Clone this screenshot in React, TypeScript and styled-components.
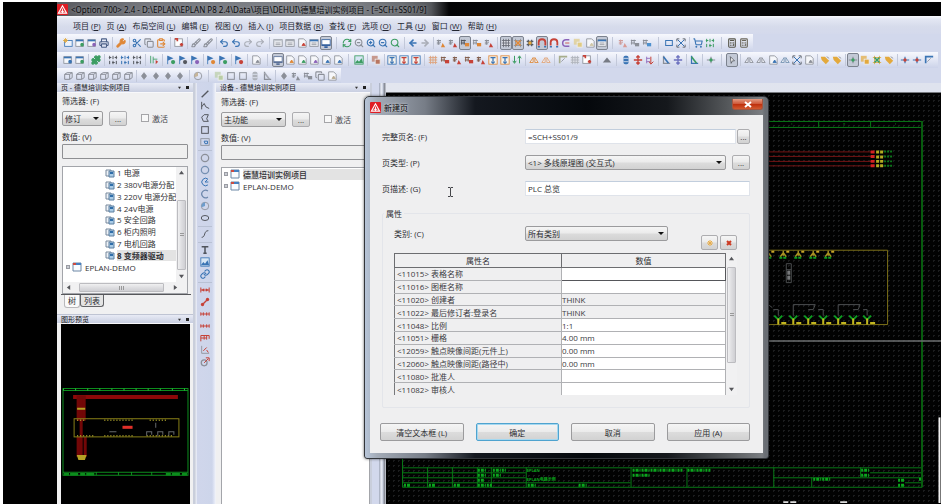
import React from "react";
import styled, { createGlobalStyle, css } from "styled-components";
import {
  Scissors, Copy, ClipboardPaste, Printer, Wrench, Brush, RefreshCw, ZoomIn, ZoomOut, Search,
  ArrowLeft, ArrowRight, Undo2, Redo2, ShoppingCart, Puzzle, Calculator, Link,
} from "lucide-react";

const Global = createGlobalStyle`
  * { box-sizing: border-box; }
  body { margin: 0; background: #000; }
  body, button, input, select, table {
    font-family: "Open Sans", "Noto Sans CJK SC", sans-serif;
    font-size: 8px;
    line-height: 11px;
    color: #2c2c30;
  }
  button, input, select { margin: 0; padding: 0; }
`;

/* ---------- shell ---------- */
const Page = styled.div`
  min-height: 100vh;
  display: flex;
  flex-direction: column;
  border-top: 2px solid #fff;
  border-left: 3px solid #fff;
  padding-left: 54px;
  background: #000;
  position: relative;
  overflow: hidden;
`;
const TitleBar = styled.header`
  height: 14px;
  flex: none;
  display: flex;
  align-items: center;
  background:
    radial-gradient(ellipse at 131px 10px, #79b2dd, transparent 16px),
    radial-gradient(ellipse at 172px 10px, #86bd7f, transparent 16px),
    radial-gradient(ellipse at 226px 10px, #c9d2d4, transparent 18px),
    radial-gradient(ellipse at 268px 12px, #d5d9dc, transparent 14px),
    linear-gradient(90deg, #5a5b60 0, #75777d 90px, #7b7e84 190px, #83868c 270px, #6c6f73 345px, #55575b 374px, #050506 392px, #08090b 60%, #000);
`;
const TitleText = styled.h1`
  margin: 0 0 0 3px;
  font-family: "Noto Sans", "Noto Sans CJK SC", sans-serif;
  font-size: 8px;
  line-height: 13px;
  font-weight: 400;
  color: #08080a;
  white-space: nowrap;
  text-shadow: 0 0 3px #a5a8ae;
`;
const MenuBar = styled.nav`
  height: 18px;
  flex: none;
  display: flex;
  align-items: center;
  gap: 6px;
  padding-left: 16px;
  background: linear-gradient(#f8f9fd 0, #e3e7f3 3px, #d6dbeb 60%, #d4d9ec);
`;
const MenuItem = styled.button`
  border: 0;
  background: none;
  white-space: nowrap;
  color: #222531;
`;
const BarRow = styled.div<{ $h: number }>`
  height: ${(p) => p.$h}px;
  flex: none;
  display: flex;
  background: #d2d8ec;
`;
const Bar = styled.div`
  display: flex;
  align-items: center;
  padding: 0 3px 0 5px;
  background: linear-gradient(#f7f8fd 0, #e4e8f5 45%, #ccd3e9);
`;
const pressedCss = css`
  background: #c3c9d6;
  border-color: #7c828e;
`;
const ToolButton = styled.button<{ $on?: boolean }>`
  width: 12px;
  height: 14px;
  flex: none;
  display: grid;
  place-items: center;
  border: 1px solid transparent;
  border-radius: 2px;
  background: none;
  ${(p) => p.$on && pressedCss}
  svg { display: block; width: 10px; height: 10px; }
`;
const Sep = styled.span<{ $w: number }>`
  width: ${(p) => p.$w}px;
  height: 12px;
  flex: none;
  background: linear-gradient(#c2c8d9, #c2c8d9) center / 1px 100% no-repeat;
`;
const Workspace = styled.main`
  flex: 1;
  display: flex;
  min-height: 421px;
  background: #d2d8ec;
`;

/* ---------- icons ---------- */
const BLUE = "#3a74b4", GREY = "#8b8f98", GREEN = "#3c9d62", RED = "#c64238", ORANGE = "#df8736", PURPLE = "#8a62b8", DARK = "#55585f", YELLOW = "#e3a93c";

function Glyph({ k, c, d = GREY }: { k: string; c: string; d?: string }) {
  const L: Record<string, any> = {
    cut: Scissors, copy: Copy, paste: ClipboardPaste, print: Printer, wrench: Wrench, brush: Brush, refresh: RefreshCw,
    zin: ZoomIn, zout: ZoomOut, find: Search, left: ArrowLeft, right: ArrowRight, undo: Undo2, redo: Redo2,
    cart: ShoppingCart, puzzle: Puzzle, calc: Calculator, link: Link,
  };
  if (L[k]) {
    const C = L[k];
    return <C color={c} strokeWidth={k === "left" || k === "right" ? 4 : 2.6} fill={k === "puzzle" || k === "wrench" ? c : "none"} />;
  }
  const s = { fill: "none", stroke: c, strokeWidth: 1.2 };
  const shapes: Record<string, React.ReactNode> = {
    win: <><rect x="1" y="2" width="9" height="8" fill="#f6f8fc" stroke={d} /><path d="M1 3h9" stroke={BLUE} strokeWidth="2" /><circle cx="8.500" cy="8" r="2.200" fill={c} /></>,
    winstar: <><rect x="2" y="3" width="9" height="7" fill="#eef2fa" stroke={BLUE} /><path d="M3 0v6M0 3h6M1 1l4 4M5 1L1 5" stroke={c} /></>,
    page: <><path d="M2 1h6l3 3v7H2z" fill="#f6f7fa" stroke={d} /><path d="M6 9l2-3 2 3z" fill={c} stroke={c} /></>,
    list: <><rect x="1" y="2" width="10" height="8" fill="#f4f5f9" stroke={d} /><path d="M1 3h10" stroke={c} strokeWidth="2" /><path d="M3 6h6M3 8h6" stroke={d} /></>,
    screen: <><rect x="1" y="2" width="10" height="7" fill="#fff" stroke={c} /><path d="M1 8.500h10M4 11h4" stroke={c} strokeWidth="2" /></>,
    region: <><rect x="1" y="1" width="9" height="9" fill="#fff" stroke={d} /><path d="M1 1h3v3M7 8h4M9 6v4" stroke={c} strokeWidth="2" fill="none" /></>,
    flag: <><path d="M2 1v10" stroke={BLUE} /><path d="M2 1l7 3-7 3z" fill={BLUE} /><circle cx="8.500" cy="8.500" r="2.500" fill={c} /></>,
    sym: <><path d="M1 3h5M1 5h5M1 7h4M3 2v6" stroke={d} strokeWidth="1.200" /><path d="M6 11l2-5 3 5z" fill={c} /></>,
    symbox: <><path d="M1 3h6M2 2v6M5 2v6M1 6h5" stroke={d} strokeWidth="1.200" /><rect x="6" y="6" width="5" height="4" fill={c} /></>,
    grid: <><rect x="1" y="2" width="10" height="8" fill="#d9dce2" /><path d="M1 3h10M1 6h10M1 9h10M3 1v10M6 1v10M9 1v10" stroke={d} /></>,
    gridx: <><path d="M1 3h10M1 9h10M3 1v10M9 1v10" stroke={d} /><path d="M3 3l6 6M9 3l-6 6" stroke={c} strokeWidth="2" /></>,
    hash: <><path d="M2 4h8M2 8h8M4 2v8M8 2v8" stroke={d} strokeWidth="1.400" /><circle cx="6" cy="6" r="2" fill={c} /></>,
    snap: <><path d="M2 9V5a4 3.500 0 0 1 8 0v4" fill="none" stroke={c} strokeWidth="2.200" /><path d="M1 10.500h2.500M8.500 10.500H11" stroke={d} strokeWidth="2" /></>,
    snapside: <><path d="M10 2H6a4 4 0 0 0 0 8h4" fill="none" stroke={c} strokeWidth="1.800" /><path d="M5 6h5" stroke={RED} /></>,
    branch: <><path d="M2 2v8M2 4h4M2 8h4" stroke={d} /><path d="M7 2v8M5 8l2 3 3-3" {...s} /></>,
    down: <path d="M3 1v8M1 7l2 3 2-3M9 10V2M7 4l2-3 2 3" {...s} />,
    pins: <path d="M2 1v4M6 1v4M10 1v4M2 7v4M6 7v4M10 7v4M1 3h3M5 9h3M8 3h3" {...s} />,
    bars: <><path d="M2 1v9M5 2v8M5 5h5" stroke={d} /><path d="M8 6l3 2-3 3z" fill={c} /></>,
    box: <rect x="2" y="3" width="8" height="6" {...s} />,
    cube: <path d="M2 4l3-2h6v6l-3 2H2zM2 4h6v6M8 4l3-2" {...s} />,
    diamond: <path d="M6 2l3 4-3 4-3-4z" fill={d} stroke={c} />,
    xarrow: <><path d="M2 2l8 8M10 2l-8 8" stroke={c} strokeWidth="1.200" /><path d="M1 4V1h3M8 1h3v3M11 8v3H8M4 11H1V8" fill="none" stroke={DARK} /></>,
    monitor: <><rect x="1" y="1" width="10" height="10" fill="#f5f2ec" stroke={c} /><path d="M3 3h6M6 4v4M4 8l2 2 2-2" fill="none" stroke={d} strokeWidth="1.500" /></>,
    move: <path d="M6 1v10M1 6h10M4 3l2-2 2 2M4 9l2 2 2-2" {...s} strokeWidth={1.6} />,
    tri: <path d="M1 9l5-6 5 6z" fill={c} />,
    corner: <><path d="M2 10V2h9" fill="none" stroke={c} strokeWidth="2" /><path d="M4 8l4-4" stroke={d} /></>,
    angle: <><path d="M3 1v9h8" fill="none" stroke={d} strokeWidth="1.500" /><path d="M3 2l6 8" stroke={c} strokeWidth="2" /></>,
    cyl: <><rect x="3" y="1" width="6" height="10" rx="2" fill={c} /><path d="M3 4h6M3 8h6" stroke="#dfe5f2" /></>,
    pointer: <path d="M4 2l5 5H6.500L5 10z" fill="#fff" stroke={c} />,
    mirror: <><path d="M1 9l4-6v6zM7 3l4 6H7z" fill="#e8ebf2" stroke={c} /></>,
    tag: <><path d="M1 2h5l5 5-4 4-5-5z" fill={c} /><path d="M8 2l3 2" stroke={d} /></>,
    group: <><rect x="1" y="1" width="7" height="7" fill={c} opacity=".7" /><rect x="5" y="5" width="6" height="6" fill={c} stroke="#eee" /></>,
    node: <><path d="M1 6h10M6 2v8" stroke={d} strokeWidth="1.400" /><circle cx="6" cy="6" r="2" fill={c} /></>,
    line: <path d="M2 10l8-8" {...s} strokeWidth={1.6} />,
    poly: <path d="M2 1v9M2 7l3-4 2 4 4 2" {...s} />,
    pgon: <path d="M10 2H5L2 5l2 5h6L8 7z" {...s} />,
    rect: <rect x="2" y="2" width="8" height="8" {...s} />,
    rectc: <><rect x="1" y="2" width="10" height="8" fill="none" stroke={d} /><path d="M5 5h4v3H6z" {...s} /></>,
    circ: <circle cx="6" cy="6" r="4.400" {...s} strokeWidth={1.5} />,
    arc: <path d="M9.500 2.500a4.500 4.500 0 1 0 0 7" {...s} strokeWidth={1.5} />,
    pie: <><path d="M9.500 2.500a4.500 4.500 0 1 0 0 7M6 6h4M6 6l3-3" {...s} /></>,
    sector: <><circle cx="6" cy="6" r="4.500" fill="none" stroke={d} /><path d="M6 6V1.500a4.500 4.500 0 0 0-4 6z" fill={c} /></>,
    oval: <ellipse cx="6" cy="6" rx="4.500" ry="3" {...s} />,
    curve: <path d="M2 10c5 0 2-8 8-8" {...s} />,
    text: <path d="M2 2h8M6 2v8M4 10h4" {...s} strokeWidth={1.8} />,
    photo: <><rect x="1" y="1" width="10" height="10" fill="#d7e6f5" stroke={c} /><path d="M1 10l3-4 2 2 3-4 2 6z" fill={c} /></>,
    dim: <><path d="M1 3v6M11 3v6M1 6h10" {...s} /><path d="M2 6l3-2v4zM10 6L7 4v4z" fill={c} /></>,
    dimc: <path d="M1 4v4M4 4v4M8 4v4M11 4v4M1 6h10" {...s} />,
    dimd: <><path d="M3 9l6-6" {...s} strokeWidth={1.6} /><circle cx="3" cy="9" r="2" fill={c} /><circle cx="9" cy="3" r="2" fill={c} /></>,
    dimg: <><path d="M1 3h10M1 3v7M5 3v5M8 3v5M11 3v4M1 6h7" {...s} /></>,
    dima: <><path d="M2 1v9h9" fill="none" stroke={d} /><path d="M4 7l4-4M8 6l2 3" {...s} /></>,
    dimr: <><circle cx="5" cy="7" r="3.500" fill="none" stroke={d} strokeWidth="1.500" /><path d="M5 7l5-5M7 1h4v4" {...s} /></>,
  };
  return <svg viewBox="0 0 12 12" aria-hidden="true">{shapes[k]}</svg>;
}

type Item = [string, string, string?, boolean?] | number;

const row1: Item[] = [
  ["winstar", YELLOW], ["win", GREEN], ["win", PURPLE], ["print", "#4b5f86"], 5, ["wrench", ORANGE], 4,
  ["cut", BLUE], ["copy", GREY], ["paste", ORANGE], 6, ["region", RED], 5, ["brush", GREY], ["brush", GREY], 4,
  ["undo", BLUE], ["undo", BLUE], ["redo", "#a9adb6"], ["redo", "#a9adb6"], 6,
  ["list", "#c3c7ce"], ["list", "#a5a9b2"], ["page", RED], ["list", BLUE], ["screen", "#35619f", GREY, true], 9,
  ["refresh", GREEN], ["zout", GREY], ["zin", BLUE], ["zout", BLUE], ["find", GREEN], 6,
  ["left", BLUE], ["right", "#a9adb6"], 4,
  ["sym", ORANGE], ["sym", RED], ["symbox", ORANGE, DARK, true], ["symbox", ORANGE], ["sym", RED], 5,
  ["grid", GREY, "#666a73", true], ["gridx", ORANGE, GREY, true], ["hash", YELLOW, DARK], ["snap", RED, BLUE, true],
  ["snap", RED, BLUE], ["snapside", PURPLE], ["group", "#e0cb83"], ["page", "#cfc6a7"], ["list", BLUE, GREY, true], 9,
  ["sym", "#d99a94", "#cf9d9b"], ["symbox", GREY], ["symbox", "#4d91cf"], 10, ["box", BLUE], ["xarrow", BLUE], 5,
  ["cart", BLUE], ["pins", GREEN], 10, ["calc", "#57564a"], ["calc", "#6b675a"],
];
const row2: Item[] = [
  ["win", BLUE], ["win", GREEN], 4, ["puzzle", GREEN], 5, ["pins", DARK], ["pins", BLUE], ["pins", DARK], 5, ["bars", RED, GREEN], 5,
  ["flag", GREEN], ["flag", DARK], ["flag", PURPLE], 4, ["flag", ORANGE], ["flag", GREEN], 4, ["flag", RED], 5, ["page", GREY], 10,
  ["screen", "#5b7199", GREY, true], ["page", ORANGE], ["page", GREEN], ["page", PURPLE], ["page", BLUE], ["page", BLUE], 9,
  ["photo", GREEN], 5, ["group", "#b87560"], 4, ["monitor", BLUE, BLUE], ["monitor", BLUE, RED], ["monitor", BLUE, RED], 5,
  ["grid", ORANGE, "#dfa27d"], ["symbox", RED, "#84604f"], ["sym", RED, "#84604f"], ["symbox", RED, "#84604f"], ["sym", RED, "#84604f"],
  ["monitor", ORANGE, BLUE], ["monitor", ORANGE, BLUE], ["down", GREEN], 5, ["mirror", ORANGE], ["mirror", "#e2a476"], 5,
  ["corner", "#a7ad8c"], ["grid", GREY, "#b0b4bd"], ["region", RED], 8, ["tri", "#777b84"], 7,
  ["cyl", BLUE], ["move", RED], ["branch", RED, PURPLE], 4, ["angle", BLUE], ["move", "#6d72bf"], 4, ["angle", GREEN, BLUE], 5,
  ["node", GREEN], 9, ["pointer", DARK, GREY, true], 5,
  ["mirror", GREY], ["mirror", GREY], ["page", BLUE], ["mirror", "#7190b0"], ["xarrow", BLUE], ["page", GREY], 4,
  ["tag", YELLOW], ["tag", YELLOW], 4, ["node", GREEN, GREY, true], ["group", YELLOW], ["gridx", GREEN, YELLOW], ["tag", YELLOW], 4,
  ["node", RED, BLUE], ["node", RED, BLUE], ["corner", BLUE],
];
const row3: Item[] = [
  ["cube", GREY], ["cube", GREY], ["cube", GREY], ["cube", GREY], ["cube", GREY], ["cube", GREY], 4,
  ["diamond", GREY], ["diamond", GREY], ["diamond", GREY], ["diamond", GREY], 6, ["sector", "#c6b59a"], 9,
  ["group", "#b9cda5"], ["rect", GREY], ["rect", GREY], ["cyl", "#adb1b9"], ["angle", "#a5a9b2"], 5,
  ["diamond", GREY], ["sym", GREY], ["symbox", GREY], ["copy", GREY], ["page", "#b8ab92"],
];
const sideTools: Item[] = [
  ["line", DARK], ["poly", DARK], ["pgon", DARK], ["rect", DARK], ["rectc", BLUE], 4,
  ["circ", GREY], ["circ", "#7690b2"], ["pie", BLUE], ["arc", "#6d87ab"], ["sector", "#6d9ccc"], ["oval", DARK], 5,
  ["curve", DARK], 4, ["text", "#50545c"], ["photo", BLUE], ["link", BLUE], 4,
  ["dim", RED], ["dimd", RED], ["dimc", RED], ["dimc", RED], ["dimg", RED], ["dima", RED], ["dimr", RED],
];

const Tools = ({ items }: { items: Item[] }) => (
  <>
    {items.map((it, i) =>
      typeof it === "number" ? <Sep key={i} $w={it} /> : (
        <ToolButton key={i} type="button" aria-label={it[0]} $on={it[3]}><Glyph k={it[0]} c={it[1]} d={it[2]} /></ToolButton>
      )
    )}
  </>
);
const SideBar = styled.div`
  width: 21px;
  flex: none;
  padding: 5px 3px 0 2px;
  background: linear-gradient(90deg, #b7bdcc 0, #fafbfe 1px, #d0d6eb 2px, #cdd5ea 17px, #dfe4f4 19px, #f4f5f8);
  display: flex;
  flex-direction: column;
  align-items: center;
  ${ToolButton} { width: 14px; height: 12px; }
  ${Sep} { width: 14px; height: 4px; background: linear-gradient(#b9c1d4, #b9c1d4) center / 100% 1px no-repeat; }
`;

/* ---------- docked panels ---------- */
const Dock = styled.aside<{ $w: number }>`
  width: ${(p) => p.$w}px;
  flex: none;
  display: flex;
  flex-direction: column;
  background: #f0f0f1;
  border-right: 2px solid #c9cedb;
`;
const DockHead = styled.div`
  height: 10px;
  flex: none;
  display: flex;
  align-items: center;
  justify-content: space-between;
  padding: 0 4px;
  background: linear-gradient(#e8ebf5, #c9cfe1);
  border-bottom: 1px solid #f8f8fb;
  h2 { margin: 0; font-size: 7px; line-height: 9px; font-weight: 400; color: #15161a; }
  span { display: flex; gap: 5px; }
  svg { width: 3px; height: 3px; display: block; }
`;
const DockBody = styled.div`
  padding: 0 5px;
  display: flex;
  flex-direction: column;
`;
const Caption = styled.label<{ $t: number }>`
  margin-top: ${(p) => p.$t}px;
  line-height: 11px;
`;
const FilterRow = styled.div`
  display: flex;
  align-items: center;
  margin-top: 4px;
  height: 16px;
  gap: 6px;
  label { display: flex; align-items: center; gap: 3px; margin-left: 8px; color: #45464a; }
`;
const Check = styled.input`
  appearance: none;
  width: 8px;
  height: 8px;
  background: #f8f8f8;
  border: 1px solid #a5a5a8;
`;
const Field = styled.input`
  height: 15px;
  width: 100%;
  min-width: 0;
  padding: 0 2px;
  background: #fff;
  border: 1px solid #dfe3ea;
  border-top-color: #c2cedd;
  outline: 0;
`;
const FilterField = styled(Field)`
  margin-top: 2px;
  border-color: #8e8f92;
  border-radius: 1px;
  background: #efefef;
`;
const raised = css`
  border: 1px solid #9b9b9d;
  border-radius: 2px;
  background: linear-gradient(#f5f5f5, #ebebeb 48%, #dcdcdc 52%, #d2d2d2);
`;
const SelectWrap = styled.span<{ $w?: number }>`
  position: relative;
  display: block;
  width: ${(p) => (p.$w ? p.$w + "px" : "100%")};
  height: 15px;
  select {
    ${raised}
    appearance: none;
    display: block;
    width: 100%;
    height: 100%;
    padding: 0 12px 0 2px;
  }
  &::after {
    content: "";
    position: absolute;
    right: 4px;
    top: 6px;
    border: 3px solid transparent;
    border-top-color: #111;
    border-bottom: 0;
    pointer-events: none;
  }
`;
const SmallButton = styled.button<{ $w?: number }>`
  ${raised}
  width: ${(p) => p.$w || 18}px;
  height: 15px;
  flex: none;
  display: grid;
  place-items: center;
  border-color: #adadb0;
  color: #333;
  svg { width: 8px; height: 8px; display: block; }
`;
const TreeBox = styled.div<{ $h?: number }>`
  margin-top: 7px;
  display: flex;
  flex-direction: column;
  ${(p) => (p.$h ? `height: ${p.$h}px;` : "flex: 1;")}
  background: #fff;
  border: 1px solid #a3a5aa;
`;
const TreeMain = styled.div`
  flex: 1;
  display: flex;
  min-height: 0;
`;
const TreeList = styled.ul<{ $h: number }>`
  flex: 1 0 0;
  min-width: 0;
  height: ${(p) => p.$h}px;
  margin: 0;
  padding: 0;
  list-style: none;
  display: grid;
  grid-auto-rows: 1fr;
  overflow: hidden;
`;
const RootList = styled(TreeList)`
  flex: none;
`;
const TreeItem = styled.li<{ $in: number; $sel?: boolean }>`
  display: flex;
  align-items: center;
  gap: 2px;
  padding-left: ${(p) => p.$in}px;
  white-space: nowrap;
  color: #303034;
  svg { flex: none; width: 10px; height: 10px; }
  b { font-weight: ${(p) => (p.$sel ? 700 : 400)}; ${(p) => p.$sel && "background: #e3e3e3; flex: 1;"} line-height: 11px; }
`;
const RootItem = styled(TreeItem)`
  gap: 3px;
  b { ${(p) => p.$sel && "font-weight: 500;"} }
  i { width: 4px; height: 4px; margin-right: -1px; border: 1px solid #9a9ca3; background: #c9ccd3; }
`;
const Track = styled.div<{ $v?: boolean }>`
  flex: none;
  ${(p) => (p.$v ? "width: 11px; flex-direction: column;" : "height: 11px;")}
  display: flex;
  align-items: center;
  justify-content: space-between;
  padding: 1px;
  background: #f1f1f2;
  svg { width: 5px; height: 5px; margin: 2px; flex: none; }
`;
const Thumb = styled.div<{ $v?: boolean; $len: number }>`
  border: 1px solid #bcbcc0;
  border-radius: 1px;
  display: grid;
  place-items: center;
  flex: none;
  ${(p) => (p.$v
    ? `width: 9px; height: ${p.$len}px; background: linear-gradient(90deg,#f0f0f1,#dedee1,#cfcfd3);`
    : `height: 9px; width: ${p.$len}px; background: linear-gradient(#f0f0f1,#dedee1,#cfcfd3);`)}
  &::before { content: ""; ${(p) => (p.$v ? "width: 4px; height: 4px; background: repeating-linear-gradient(#999 0 1px, transparent 1px 2px);" : "width: 6px; height: 4px; background: repeating-linear-gradient(90deg,#999 0 1px, transparent 1px 2px);")} }
`;
const Spacer = styled.div<{ $h: number }>`
  height: ${(p) => p.$h}px;
  flex: none;
`;
const Tabs = styled.div`
  display: flex;
  height: 16px;
  align-items: flex-start;
  margin: 0 2px 0 4px;
  border-top: 1px solid #56575b;
`;
const Tab = styled.button<{ $on?: boolean }>`
  height: ${(p) => (p.$on ? 13 : 12)}px;
  padding: 0 3px;
  border: 1px solid ${(p) => (p.$on ? "#b9b9bc" : "#626367")};
  border-top: 0;
  border-radius: 0 0 3px 3px;
  background: ${(p) => (p.$on ? "#fafafa" : "#e4e4e4")};
  line-height: 10px;
  &:first-child { margin-left: 3px; }
`;
const Preview = styled.div`
  flex: 1;
  margin: 0 3px 0 4px;
  background: #000;
  svg { display: block; width: 100%; }
`;
const PreviewHead = styled(DockHead)`
  margin-top: 4px;
  border-top: 1px solid #bfc4d3;
`;
const DevicePane = styled(Dock)`
  ${DockBody} { flex: 1; padding-right: 0; }
`;
const CanvasCol = styled.section`
  flex: 1;
  min-width: 0;
  margin-left: 7px;
  padding: 9px 0 0 7px;
  display: flex;
  background: linear-gradient(90deg, #aeb5c6 0 1px, #eef0f6 2px, #c8cfe0 4px, #8a8e98 5px 6px, #e3e6ef 7px, #dfe3ee);
`;
const Canvas = styled.div`
  flex: 1;
  min-width: 0;
  overflow: hidden;
  border-top: 1px solid #77797e;
  background-color: #020202;
  background-image: radial-gradient(circle, #1c1d1e 0 1px, transparent 1px);
  background-size: 5px 5px;
  svg { display: block; width: 100%; }
`;

const Arrow = ({ d }: { d: "u" | "d" | "l" | "r" }) => (
  <svg viewBox="0 0 6 6"><path fill="#55565a" d={{ u: "M0 5l3-4 3 4z", d: "M0 1l3 4 3-4z", l: "M5 0L1 3l4 3z", r: "M1 0l4 3-4 3z" }[d]} /></svg>
);
const PageIcon = () => (
  <svg viewBox="0 0 10 10"><path d="M1 2h5v6H1z" fill="#eef2f7" stroke="#76889c" /><path d="M4 3h5v6H4z" fill="#a9cbe6" stroke="#5d7f9f" /><path d="M5 5h3" stroke="#2f6ea9" strokeWidth="2" /></svg>
);
const ProjectIcon = () => (
  <svg viewBox="0 0 10 10"><path d="M1 1h8v8H1z" fill="#fafcff" stroke="#6d87a5" /><path d="M1 2h8" stroke="#4680c0" strokeWidth="2" /><path d="M1 2h3" stroke="#cf4b3f" strokeWidth="2" /></svg>
);
const LogoIcon = () => (
  <svg width="11" height="11" viewBox="0 0 12 12"><rect width="12" height="12" rx="1" fill="#e01d24" /><path d="M6 2L1.500 10h9z" fill="none" stroke="#fff" strokeWidth="1.200" /><path d="M6 5v5M4 8h4" stroke="#fff" /></svg>
);
const HeadMarks = () => (
  <span><svg viewBox="0 0 4 4"><path d="M0 1h4L2 4z" fill="#333" /></svg><svg viewBox="0 0 4 4"><rect width="4" height="4" fill="#222" /></svg></span>
);

function FilterArea({ id, top, value, w }: { id: string; top: number; value: string; w: number }) {
  return (
    <>
      <Caption htmlFor={id + "f"} $t={top}>筛选器: (F)</Caption>
      <FilterRow>
        <SelectWrap $w={w}><select id={id + "f"}><option>{value}</option></select></SelectWrap>
        <SmallButton type="button">...</SmallButton>
        <label><Check type="checkbox" />激活</label>
      </FilterRow>
      <Caption htmlFor={id + "v"} $t={5}>数值: (V)</Caption>
      <FilterField id={id + "v"} />
    </>
  );
}

function PreviewDrawing() {
  return (
    <svg viewBox="0 0 128 180">
      <g fill="none" stroke="#0c8d1d">
        <path d="M2 64h124v86H2zM2 66h124" />
        <path d="M2 147h124M35 147v3M57 147v3M70 147v3M90 147v3" />
        <path d="M3 149h30M104 149h21" strokeWidth="2.500" strokeDasharray="5 1 8 2" />
        <path d="M2 65h124" strokeDasharray="1 11" stroke="#2bbb3c" strokeWidth="2" />
      </g>
      <path d="M12 72.500h104" stroke="#8c0808" strokeWidth="4" />
      <path d="M17 71v25M20 71v62M23 71v25M17 112v20M24 112v20" stroke="#720707" strokeWidth="3" />
      <path d="M16 84h8M17 131h7l-1 3h-5z" stroke="#b5a124" strokeWidth="2" fill="#b5a124" />
      <rect x="13" y="94" width="104" height="18" fill="none" stroke="#877e17" />
      <path d="M16 95.500h9M43 95.500h30M88 95.500h17M16 111h16M43 111h30M85 111h27" stroke="#aaa02c" strokeWidth="1.500" strokeDasharray="1 2" />
      <path d="M61 102.500h10" stroke="#e03029" strokeWidth="3" />
      <path d="M48 107h7M94 98v5M85 111v-4h5v3M96 111v-4h5v3M107 111v-4h5v3" fill="none" stroke="#65686b" />
    </svg>
  );
}

function Schematic() {
  const top = [768, 783, 798, 813, 828];
  const bottom = [778, 793, 808, 823, 838, 853, 867];
  return (
    <svg viewBox="385 93 556 411">
      <g fill="none" stroke="#087816">
        <path d="M401.500 121.500H922V488H401.500zM401 127.500h521M818.500 121v6M870.500 121v6M791 124h1M843 124h2M895 124h1" />
        <path d="M401 468.500h521M401 473.500h124M401 478.500h124M401 483.500h229M773 478.500h149M870 473.500h52M905 483.500h17" />
        <path d="M426.500 468v20M451.500 468v20M476.500 468v20M490.500 468v20M525.500 468v20M630.500 468v20M686.500 468v20M773.500 468v20M811.500 478v10M860.500 468v10" />
      </g>
      <path d="M922 121v367" stroke="#075c0e" strokeWidth="2" />
      <g stroke="#0aa51c" strokeWidth="3" strokeDasharray="2 1 3 1 1 1">
        <path d="M477 471h8M477 476h8M492 471h13M492 476h9M477 481h6M403 486h6M428 486h6M453 486h6M477 486h14M527 486h8M578 486h9" />
        <path d="M632 471h50M632 476h17M687 471h23M813 480h18M861 471h9M861 476h9M898 481h7M898 486h7M919 480h3" />
      </g>
      <g fill="#0aa51c" fontFamily="Open Sans, Noto Sans CJK SC, sans-serif" fontSize="4" fontWeight="700">
        <text x="526" y="473">EPLAN</text>
        <text x="526" y="482">EPLAN电路示例</text>
      </g>
      <path d="M760 152h112M760 156.500h112M760 161.500h112M760 166h112" stroke="#761414" />
      <path d="M870.500 152h4M870.500 156.500h4M870.500 161.500h4M870.500 166h4" stroke="#d42222" strokeWidth="3" />
      <path d="M876 152h7M876 157h7M876 161.500h7M876 166h7" stroke="#b3ab21" strokeWidth="3" strokeDasharray="3 1" />
      <path d="M884 151.500h8M884 156.500h8M884 161.500h8M884 166h8" stroke="#0c741a" strokeWidth="2" strokeDasharray="2 1" />
      <path d="M760 250.500H887.500V325H760" fill="none" stroke="#7d7018" />
      {top.map((x) => (
        <g key={x}>
          <path d={`M${x} 251v5M${x - 3} 257l3-4 3 4`} fill="none" stroke="#a69122" strokeWidth="1.500" />
          <path d={`M${x - 4} 258h8`} stroke="#0c9c20" strokeWidth="2" strokeDasharray="3 1" />
          <path d={`M${x + 3} 252h3`} stroke="#c9a62a" strokeWidth="2" />
        </g>
      ))}
      {bottom.map((x) => (
        <g key={x}>
          <path d={`M${x - 4} 316l4 4 4-4`} fill="none" stroke="#0c9c20" strokeWidth="2" />
          <path d={`M${x} 319v6M${x + 3} 323.500h5`} fill="none" stroke="#c3b720" strokeWidth="2" />
        </g>
      ))}
      <path d="M786 264h5v19h-5zM786 270h5M793 316v-11h22l-2 5h-5M823 316v-6h-5M838 316v-11h22l-2 5h-5M867 316v-6h-4M768 305l4 3M778 316v-6h-5" fill="none" stroke="#4c4e50" />
      <path d="M788.500 271v10" stroke="#76787a" strokeWidth="3" strokeDasharray="4 1" />
      <path d="M760 341.500h181" stroke="#6d6f70" strokeWidth="1.500" />
      <path d="M783 503h5M790 503h6M840 503h7" stroke="#ddd" strokeWidth="2" />
      <path d="M939.500 418v86" stroke="#f1f1f1" strokeWidth="2" />
    </svg>
  );
}

/* ---------- dialog ---------- */
const Dialog = styled.section`
  position: absolute;
  left: 361px;
  top: 94px;
  width: 405px;
  padding: 2px 5px 5px;
  border: 1px solid #33363b;
  border-radius: 5px 5px 3px 3px;
  background: linear-gradient(90deg, #b7c5d8 0, #a3abb7 12px, #777d87 60px, #14181f 110px, #05080c 55%, #15181c 75%, #55585b 90%, #7b7e82 397px, #6a6e74 400px);
  box-shadow: 0 0 3px #0009;
`;
const DialogHead = styled.header`
  height: 16px;
  display: flex;
  align-items: center;
  gap: 3px;
  h2 { margin: 0; flex: 1; font-size: 8px; font-weight: 400; color: #050506; text-shadow: 0 0 3px #d8dbe0, 0 0 2px #c5c8ce; }
`;
const CloseButton = styled.button`
  align-self: flex-start;
  width: 31px;
  height: 11px;
  display: grid;
  place-items: center;
  border: 1px solid #a3553f;
  border-top: 0;
  border-radius: 0 0 3px 3px;
  background: linear-gradient(#e39b83, #d05c3d 45%, #bd2f0c 52%, #d25a30);
  svg { width: 8px; height: 7px; display: block; }
`;
const DialogBody = styled.form`
  background: #efeff0;
  padding: 14px 13px 12px 12px;
`;
const FormGrid = styled.div`
  display: grid;
  grid-template-columns: 143px 1fr;
  row-gap: 11px;
  align-items: center;
`;
const Cell = styled.div<{ $gap?: number }>`
  display: flex;
  gap: ${(p) => p.$gap || 0}px;
`;
const Group = styled.fieldset`
  margin: 12px 0 0;
  padding: 7px 12px 12px 11px;
  border: 1px solid #e3e5ea;
  border-radius: 2px;
  min-width: 0;
  legend { padding: 0 2px; margin-left: -10px; }
`;
const CategoryRow = styled.div`
  display: grid;
  grid-template-columns: 131px 143px 1fr;
  height: 27px;
  label { line-height: 15px; }
`;
const IconPair = styled.div`
  display: flex;
  gap: 2px;
  justify-content: flex-end;
  align-self: end;
  margin-bottom: 3px;
`;
const TableArea = styled.div`
  display: flex;
  height: 142px;
  overflow: hidden;
`;
const PropTable = styled.table`
  flex: 1;
  height: 142px;
  border-collapse: collapse;
  table-layout: fixed;
  border: 1px solid #77787b;
  border-bottom: 0;
  th { font-weight: 400; padding: 0; height: 14px; background: #efeff0; border: 1px solid #6c6d70; line-height: 11px; }
  th:first-child { width: 167px; }
  td { padding: 0 2px; line-height: 11px; border: 1px solid #b0b1b4; border-left-color: #77787b; background: #efeff0; white-space: nowrap; color: #3a3a3e; }
  td + td { padding: 0; }
  tr:last-child td { border-bottom: 0; }
`;
const Value = styled.td<{ $edit?: boolean; $focus?: boolean }>`
  ${(p) => p.$edit && "&& { background: #fff; }"}
  ${(p) => p.$focus && "&& { border: 1px solid #55565a; }"}
`;
const Actions = styled.div`
  margin: 15px 0 0 -2px;
  display: grid;
  grid-template-columns: repeat(4, 1fr);
  gap: 12px;
`;
const ActionButton = styled.button<{ $main?: boolean }>`
  ${raised}
  height: 18px;
  ${(p) => p.$main && "border-color: #4fa3cf; box-shadow: inset 0 0 0 1px #a5d8f0;"}
`;
const Caret = styled.div`
  position: absolute;
  left: 445px;
  top: 185px;
  svg { display: block; width: 5px; height: 10px; }
`;

const menus: [string, string][] = [
  ["项目", "P"], ["页", "A"], ["布局空间", "L"], ["编辑", "E"], ["视图", "V"], ["插入", "I"],
  ["项目数据", "R"], ["查找", "F"], ["选项", "O"], ["工具", "U"], ["窗口", "W"], ["帮助", "H"],
];
const pages = ["1 电源", "2 380V电源分配", "3 220V 电源分配", "4 24V电源", "5 安全回路", "6 柜内照明", "7 电机回路", "8 变频器驱动"];
const props: [string, string, boolean][] = [
  ["<11015> 表格名称", "", true], ["<11016> 图框名称", "", true], ["<11020> 创建者", "THINK", false],
  ["<11022> 最后修订者:登录名", "THINK", false], ["<11048> 比例", "1:1", true], ["<11051> 栅格", "4.00 mm", true],
  ["<12059> 触点映像间距(元件上)", "0.00 mm", true], ["<12060> 触点映像间距(路径中)", "0.00 mm", true],
  ["<11080> 批准人", "", true], ["<11082> 审核人", "", true],
];

export default function App() {
  return (
    <Page>
      <Global />
      <TitleBar>
        <LogoIcon />
        <TitleText>{"<Option 700> 2.4 - D:\\EPLAN\\EPLAN P8 2.4\\Data\\项目\\DEHUI\\德慧培训实例项目 - [=SCH+SS01/9]"}</TitleText>
      </TitleBar>
      <MenuBar>
        {menus.map(([t, k]) => <MenuItem key={t} type="button">{t} (<u>{k}</u>)</MenuItem>)}
      </MenuBar>
      <BarRow $h={18}><Bar><Tools items={row1} /></Bar></BarRow>
      <BarRow $h={16}><Bar><Tools items={row2} /></Bar></BarRow>
      <BarRow $h={15}><Bar><Tools items={row3} /></Bar></BarRow>
      <Workspace>
        <Dock $w={138}>
          <DockHead><h2>页 - 德慧培训实例项目</h2><HeadMarks /></DockHead>
          <DockBody>
            <FilterArea id="page" top={2} value="修订" w={41} />
            <TreeBox $h={128}>
              <TreeMain>
                <TreeList $h={106}>
                  {pages.map((p, i) => (
                    <TreeItem key={p} $in={42} $sel={i === 7}><PageIcon /><b>{p}</b></TreeItem>
                  ))}
                  <RootItem $in={3}><i /><ProjectIcon /><b>EPLAN-DEMO</b></RootItem>
                </TreeList>
                <Track $v><Arrow d="u" /><Spacer $h={18} /><Thumb $v $len={70} /><Arrow d="d" /></Track>
              </TreeMain>
              <Track><Arrow d="l" /><Thumb $len={85} /><Arrow d="r" /><Spacer $h={1} /></Track>
            </TreeBox>
          </DockBody>
          <Tabs><Tab type="button" $on>树</Tab><Tab type="button">列表</Tab></Tabs>
          <PreviewHead><h2>图形预览</h2><HeadMarks /></PreviewHead>
          <Preview><PreviewDrawing /></Preview>
        </Dock>
        <SideBar><Tools items={sideTools} /></SideBar>
        <DevicePane $w={156}>
          <DockHead><h2>设备 - 德慧培训实例项目</h2><HeadMarks /></DockHead>
          <DockBody>
            <FilterArea id="dev" top={3} value="主功能" w={65} />
            <TreeBox>
              <RootList $h={24}>
                <RootItem $in={2} $sel><i /><ProjectIcon /><b>德慧培训实例项目</b></RootItem>
                <RootItem $in={2}><i /><ProjectIcon /><b>EPLAN-DEMO</b></RootItem>
              </RootList>
            </TreeBox>
          </DockBody>
        </DevicePane>
        <CanvasCol><Canvas><Schematic /></Canvas></CanvasCol>
      </Workspace>

      <Dialog role="dialog" aria-labelledby="dlg">
        <DialogHead>
          <LogoIcon />
          <h2 id="dlg">新建页</h2>
          <CloseButton type="button" aria-label="关闭"><svg viewBox="0 0 8 7"><path d="M1 1l6 5M7 1L1 6" stroke="#fff" strokeWidth="2" /></svg></CloseButton>
        </DialogHead>
        <DialogBody>
          <FormGrid>
            <label htmlFor="name">完整页名: (F)</label>
            <Cell $gap={1}><Field id="name" defaultValue="=SCH+SS01/9" /><SmallButton type="button" $w={13}>...</SmallButton></Cell>
            <label htmlFor="type">页类型: (P)</label>
            <Cell $gap={6}><SelectWrap><select id="type"><option>{"<1> 多线原理图 (交互式)"}</option></select></SelectWrap><SmallButton type="button">...</SmallButton></Cell>
            <label htmlFor="desc">页描述: (G)</label>
            <Cell><Field id="desc" defaultValue="PLC 总览" /></Cell>
          </FormGrid>
          <Group>
            <legend>属性</legend>
            <CategoryRow>
              <label htmlFor="cat">类别: (C)</label>
              <SelectWrap><select id="cat"><option>所有类别</option></select></SelectWrap>
              <IconPair>
                <SmallButton type="button" $w={17} aria-label="新建"><svg viewBox="0 0 8 8"><path d="M4 1v6M1 4h6M2 2l4 4M6 2L2 6" stroke="#e9ac45" /></svg></SmallButton>
                <SmallButton type="button" $w={17} aria-label="删除"><svg viewBox="0 0 8 8"><path d="M2 2l4 4M6 2L2 6" stroke="#cc3a22" strokeWidth="2" /></svg></SmallButton>
              </IconPair>
            </CategoryRow>
            <TableArea>
              <PropTable>
                <thead><tr><th>属性名</th><th>数值</th></tr></thead>
                <tbody>
                  {props.map(([n, v, e], i) => <tr key={n}><td>{n}</td><Value $edit={e} $focus={i === 0}>{v}</Value></tr>)}
                </tbody>
              </PropTable>
              <Track $v><Arrow d="u" /><Thumb $v $len={96} /><Spacer $h={14} /><Arrow d="d" /></Track>
            </TableArea>
          </Group>
          <Actions>
            <ActionButton type="button">清空文本框 (L)</ActionButton>
            <ActionButton type="submit" $main>确定</ActionButton>
            <ActionButton type="button">取消</ActionButton>
            <ActionButton type="button">应用 (A)</ActionButton>
          </Actions>
        </DialogBody>
      </Dialog>
      <Caret><svg viewBox="0 0 5 10"><path d="M0 .5h2l.5.5.5-.5h2M2.500 1v8M0 9.500h2l.5-.5.5.5h2" fill="none" stroke="#45464a" /></svg></Caret>
    </Page>
  );
}
